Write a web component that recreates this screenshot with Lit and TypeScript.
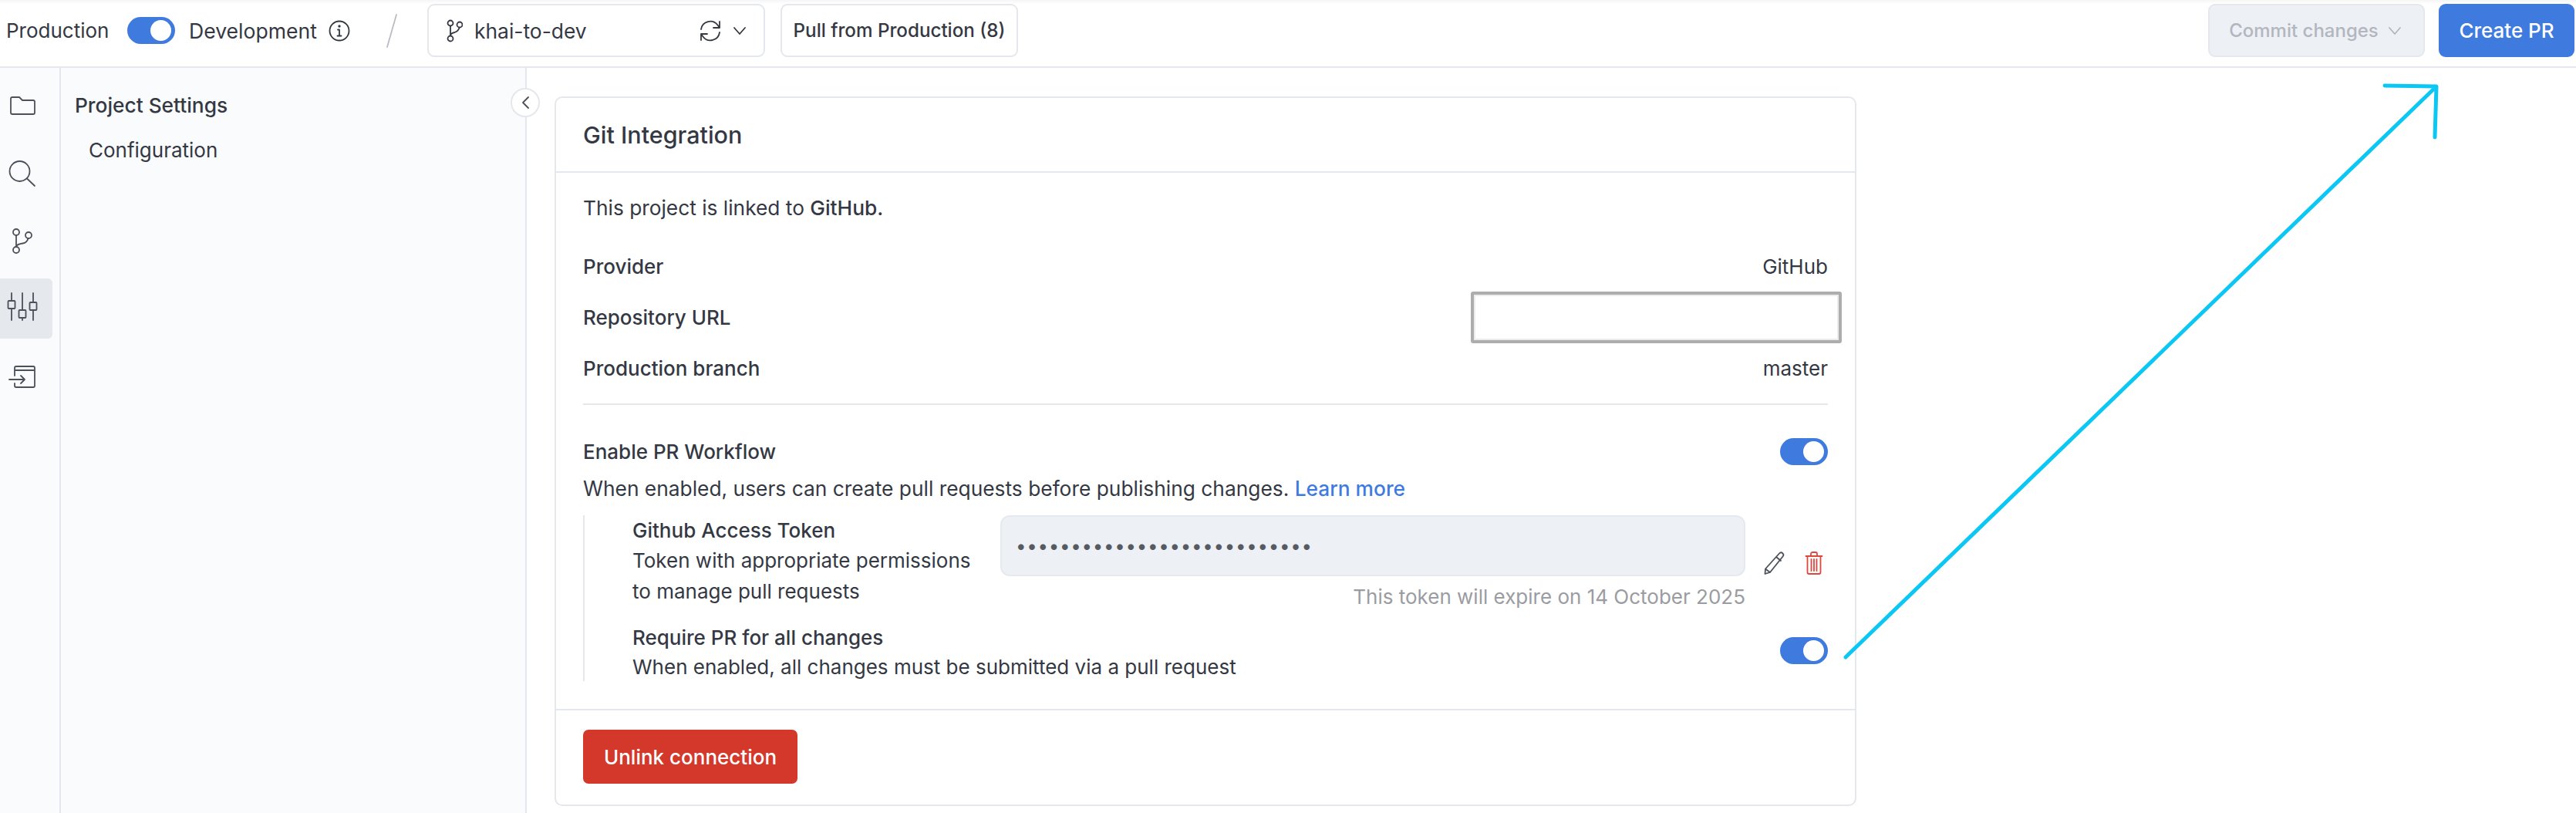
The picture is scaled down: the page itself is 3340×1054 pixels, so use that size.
import { LitElement, html, css, svg } from "lit";
import { customElement } from "lit/decorators.js";

const icon = (w: number, h: number, body: unknown, cls = "") => html`<svg class=${cls} width=${w} height=${h} viewBox="0 0 ${w} ${h}" fill="none" stroke="currentColor" stroke-width="1.800" stroke-linecap="round" stroke-linejoin="round">${body}</svg>`;

const railIcons = [
  svg`<path d="M14 31a2 2 0 0 1 2-2h9l4 4h14a2 2 0 0 1 2 2v14a2 2 0 0 1-2 2H16a2 2 0 0 1-2-2z"/>`,
  svg`<circle cx="25.500" cy="37" r="13"/><path d="M35 46.500 45 56"/>`,
  svg`<circle cx="21" cy="28" r="4"/><circle cx="37" cy="32" r="4"/><circle cx="21" cy="51" r="4"/><path d="M21 32v15M36.500 36c-1 4-3 6-7 6.500-4 .5-7 1-8.500 4"/>`,
  svg`<path d="M15 19v10M15 39v15M29 19v22M29 51v3M43 19v12M43 41v13"/><rect x="10.500" y="29" width="9" height="10" rx="1"/><rect x="24.500" y="41" width="9" height="10" rx="1"/><rect x="38.500" y="31" width="9" height="10" rx="1"/>`,
  svg`<path d="M19 38v-10a2 2 0 0 1 2-2h22a2 2 0 0 1 2 2v23a2 2 0 0 1-2 2H21a2 2 0 0 1-2-2v-3M19 31h26M12 43h20M27 38l5 5-5 5"/>`,
];

@customElement("app-root")
export class AppRoot extends LitElement {
  static styles = css`
    :host { display: block; position: relative; width: 3340px; height: 1054px; overflow: hidden; background: #fff; font-family: Inter, "Liberation Sans", sans-serif; font-size: 26px; color: #343843; letter-spacing: 0; }
    * { box-sizing: border-box; }
    .top { height: 88px; border-bottom: 2px solid #e4e7ec; background: linear-gradient(#f5f5f5 0, #fff 5px); display: flex; align-items: flex-start; padding: 5px 2px 0 8px; }
    .ctl { height: 69px; display: flex; align-items: center; }
    .switch { flex: none; width: 62px; height: 35px; border-radius: 18px; background: #3f7bdf; display: flex; align-items: center; justify-content: flex-end; padding-right: 5px; }
    .switch i { display: block; width: 27px; height: 27px; border-radius: 50%; background: #fff; }
    .prod { width: 157px; }
    .dev { margin-left: 18px; width: 181px; font-size: 26.600px; }
    .info { color: #343843; }
    .slash { width: 100px; justify-content: center; color: #b9bcc3; padding-left: 8px; }
    .outline { border: 2px solid #e4e7ec; border-radius: 9px; background: #fff; }
    .branch { width: 438px; padding-left: 22px; color: #343843; }
    .branch span { margin-left: 15px; flex: 1; font-size: 26.400px; }
    .branch .sync { margin-right: 14px; }
    .branch .chev { margin-right: 22px; }
    .pull { margin-left: 20px; width: 308px; justify-content: center; font-weight: 500; font-size: 24.200px; }
    .spacer { flex: 1; }
    .commit { width: 281px; border: 2px solid #e4e7ec; border-radius: 9px; background: #edf0f5; color: #b3b6bf; justify-content: center; gap: 12px; font-weight: 500; font-size: 24px; padding-right: 3px; }
    .create { margin-left: 18px; width: 176px; border-radius: 9px; background: #3f7bdf; color: #fff; justify-content: center; font-weight: 500; font-size: 26px; }
    .body { display: flex; height: 966px; }
    .rail { width: 79px; flex: none; background: #fafbfd; border-right: 2px solid #e4e7ec; padding-top: 9px; display: flex; flex-direction: column; gap: 10px; }
    .rail div { width: 68px; height: 78px; color: #4c5059; border-radius: 0 6px 6px 0; }
    .rail div.on { background: #e5e8ec; }
    .side { position: relative; width: 604px; flex: none; background: #fafbfd; border-right: 2px solid #e4e7ec; padding: 30px 0 0 18px; }
    .side .h { height: 36px; display: flex; align-items: center; font-weight: 500; font-size: 26.300px; }
    .side .c { margin: 22px 0 0 18px; height: 36px; display: flex; align-items: center; }
    .collapse { position: absolute; top: 26px; right: -19px; width: 38px; height: 38px; border-radius: 50%; background: #fff; border: 2px solid #e4e7ec; color: #4c5059; display: flex; align-items: center; justify-content: center; }
    .main { flex: 1; padding: 37px 0 0 36px; }
    .card { width: 1688px; height: 920px; border: 2px solid #e4e7ec; border-radius: 10px; display: flex; flex-direction: column; }
    .card-h { height: 97px; flex: none; border-bottom: 2px solid #e4e7ec; display: flex; align-items: center; padding-left: 35px; font-size: 30.500px; font-weight: 500; }
    .card-b { flex: 1; padding: 23px 35px 0 35px; display: flex; flex-direction: column; }
    .intro { height: 44px; display: flex; align-items: center; gap: 0.28em; font-size: 26.300px; }
    .med { font-weight: 500; }
    .rows { margin-top: 21px; }
    .row { height: 66px; display: flex; align-items: center; justify-content: space-between; }
    .label { font-weight: 500; }
    .urlbox { width: 481px; height: 67px; margin-right: -18px; border: 4px solid #adadad; border-radius: 3px; box-shadow: inset 0 0 0 2px #ececec; background: #fff; }
    hr { margin: 13px 0 0; width: 100%; border: 0; height: 2px; background: #e4e7ec; }
    .enable { margin-top: 43px; height: 35px; display: flex; align-items: center; justify-content: space-between; }
    .desc { margin-top: 12px; height: 36px; display: flex; align-items: center; gap: 0.28em; font-size: 26.350px; }
    .desc a { color: #3f7bdf; font-weight: 500; text-decoration: none; }
    .sub { margin-top: 17px; height: 215px; border-left: 2px solid #e4e7ec; padding-left: 62px; display: flex; flex-direction: column; }
    .token { display: flex; align-items: flex-start; height: 141px; }
    .t-left { width: 477px; flex: none; line-height: 40px; }
    .t-title { font-weight: 500; height: 39px; }
    .t-mid { width: 966px; flex: none; }
    .input { height: 79px; border: 2px solid #e6e9ee; border-radius: 12px; background: #edf0f5; display: flex; align-items: center; padding-left: 18px; color: #555a63; font-size: 24px; letter-spacing: 0.750px; }
    .exp { margin-top: 8px; text-align: right; color: #9b9ca1; height: 36px; display: flex; align-items: center; justify-content: flex-end; }
    .t-icons { display: flex; gap: 26px; margin: 47px 0 0 23px; }
    .pencil { color: #4c5059; }
    .trash { color: #e0473c; }
    .req { display: flex; justify-content: space-between; align-items: flex-start; }
    .req .sw { margin-top: 19px; }
    .req .t { height: 38px; display: flex; align-items: center; }
    .foot { height: 124px; flex: none; border-top: 2px solid #e4e7ec; padding: 25px 0 0 35px; }
    .unlink { width: 278px; height: 70px; border-radius: 7px; background: #d3382b; color: #fff; font-weight: 500; display: flex; align-items: center; justify-content: center; }
    .arrow { position: absolute; left: 0; top: 0; pointer-events: none; color: #0bc7f4; }
  `;

  render() {
    return html`
      <div class="top">
        <div class="ctl prod">Production</div>
        <div class="ctl"><div class="switch"><i></i></div></div>
        <div class="ctl dev">Development</div>
        <div class="ctl info">${icon(28, 28, svg`<circle cx="14" cy="14" r="12.500"/><path d="M14 13v7M11.500 20.500h5M12 12.500h2"/><circle cx="14" cy="8" r=".8"/>`)}</div>
        <div class="ctl slash">${icon(14, 44, svg`<path d="M13 1 1 43"/>`)}</div>
        <div class="ctl outline branch">
          ${icon(22, 30, svg`<circle cx="6" cy="5" r="3.500"/><circle cx="18" cy="7" r="3.500"/><circle cx="6" cy="25" r="3.500"/><path d="M6 9v12M17.500 11c-1 4-3 5-6 6-3 .5-5 1-5.500 4"/>`)}
          <span>khai-to-dev</span>
          ${icon(30, 30, svg`<path d="M3 13A12 12 0 0 1 24.500 7.500L27 11M27 3v8h-8M27 17A12 12 0 0 1 5.500 22.500L3 19M3 27v-8h8"/>`, "sync")}
          ${icon(18, 12, svg`<path d="m2 2 7 8 7-8"/>`, "chev")}
        </div>
        <div class="ctl outline pull">Pull from Production (8)</div>
        <div class="spacer"></div>
        <div class="ctl commit">Commit changes ${icon(18, 12, svg`<path d="m2 2 7 8 7-8"/>`)}</div>
        <div class="ctl create">Create PR</div>
      </div>
      <div class="body">
        <div class="rail">
          ${railIcons.map((p, i) => html`<div class=${i === 3 ? "on" : ""}>${icon(68, 78, p)}</div>`)}
        </div>
        <div class="side">
          <div class="h">Project Settings</div>
          <div class="c">Configuration</div>
          <div class="collapse">${icon(12, 18, svg`<path d="M10 2 3 9l7 7"/>`)}</div>
        </div>
        <div class="main">
          <div class="card">
            <div class="card-h">Git Integration</div>
            <div class="card-b">
              <div class="intro"><span>This project is linked to</span><span class="med">GitHub.</span></div>
              <div class="rows">
                <div class="row"><span class="label">Provider</span><span>GitHub</span></div>
                <div class="row"><span class="label">Repository URL</span><div class="urlbox"></div></div>
                <div class="row"><span class="label">Production branch</span><span>master</span></div>
              </div>
              <hr />
              <div class="enable"><span class="label">Enable PR Workflow</span><div class="switch"><i></i></div></div>
              <div class="desc"><span>When enabled, users can create pull requests before publishing changes.</span><a>Learn more</a></div>
              <div class="sub">
                <div class="token">
                  <div class="t-left">
                    <div class="t-title">Github Access Token</div>
                    <div>Token with appropriate permissions<br />to manage pull requests</div>
                  </div>
                  <div class="t-mid">
                    <div class="input">•••••••••••••••••••••••••••</div>
                    <div class="exp">This token will expire on 14 October 2025</div>
                  </div>
                  <div class="t-icons">
                    ${icon(28, 30, svg`<path d="M21 2.500a3 3 0 0 1 4.500 4L9 27l-6.500 2 .5-6.500zM17 7l6 5M3 22.500 9 27"/>`, "pencil")}
                    ${icon(24, 30, svg`<path d="M1.500 6h21M8 6V3a2 2 0 0 1 2-2h4a2 2 0 0 1 2 2v3M3.500 6v21a2 2 0 0 0 2 2h13a2 2 0 0 0 2-2V6M8.500 10v15M12 10v15M15.500 10v15"/>`, "trash")}
                  </div>
                </div>
                <div class="req">
                  <div>
                    <div class="t label">Require PR for all changes</div>
                    <div class="t">When enabled, all changes must be submitted via a pull request</div>
                  </div>
                  <div class="switch sw"><i></i></div>
                </div>
              </div>
            </div>
            <div class="foot"><div class="unlink">Unlink connection</div></div>
          </div>
        </div>
      </div>
      <svg class="arrow" width="3340" height="1054" fill="none" stroke="currentColor" stroke-width="5" stroke-linecap="round" stroke-linejoin="round"><path d="M2393 852 3158 113M3092 111l67 1-2 66"/></svg>
    `;
  }
}
